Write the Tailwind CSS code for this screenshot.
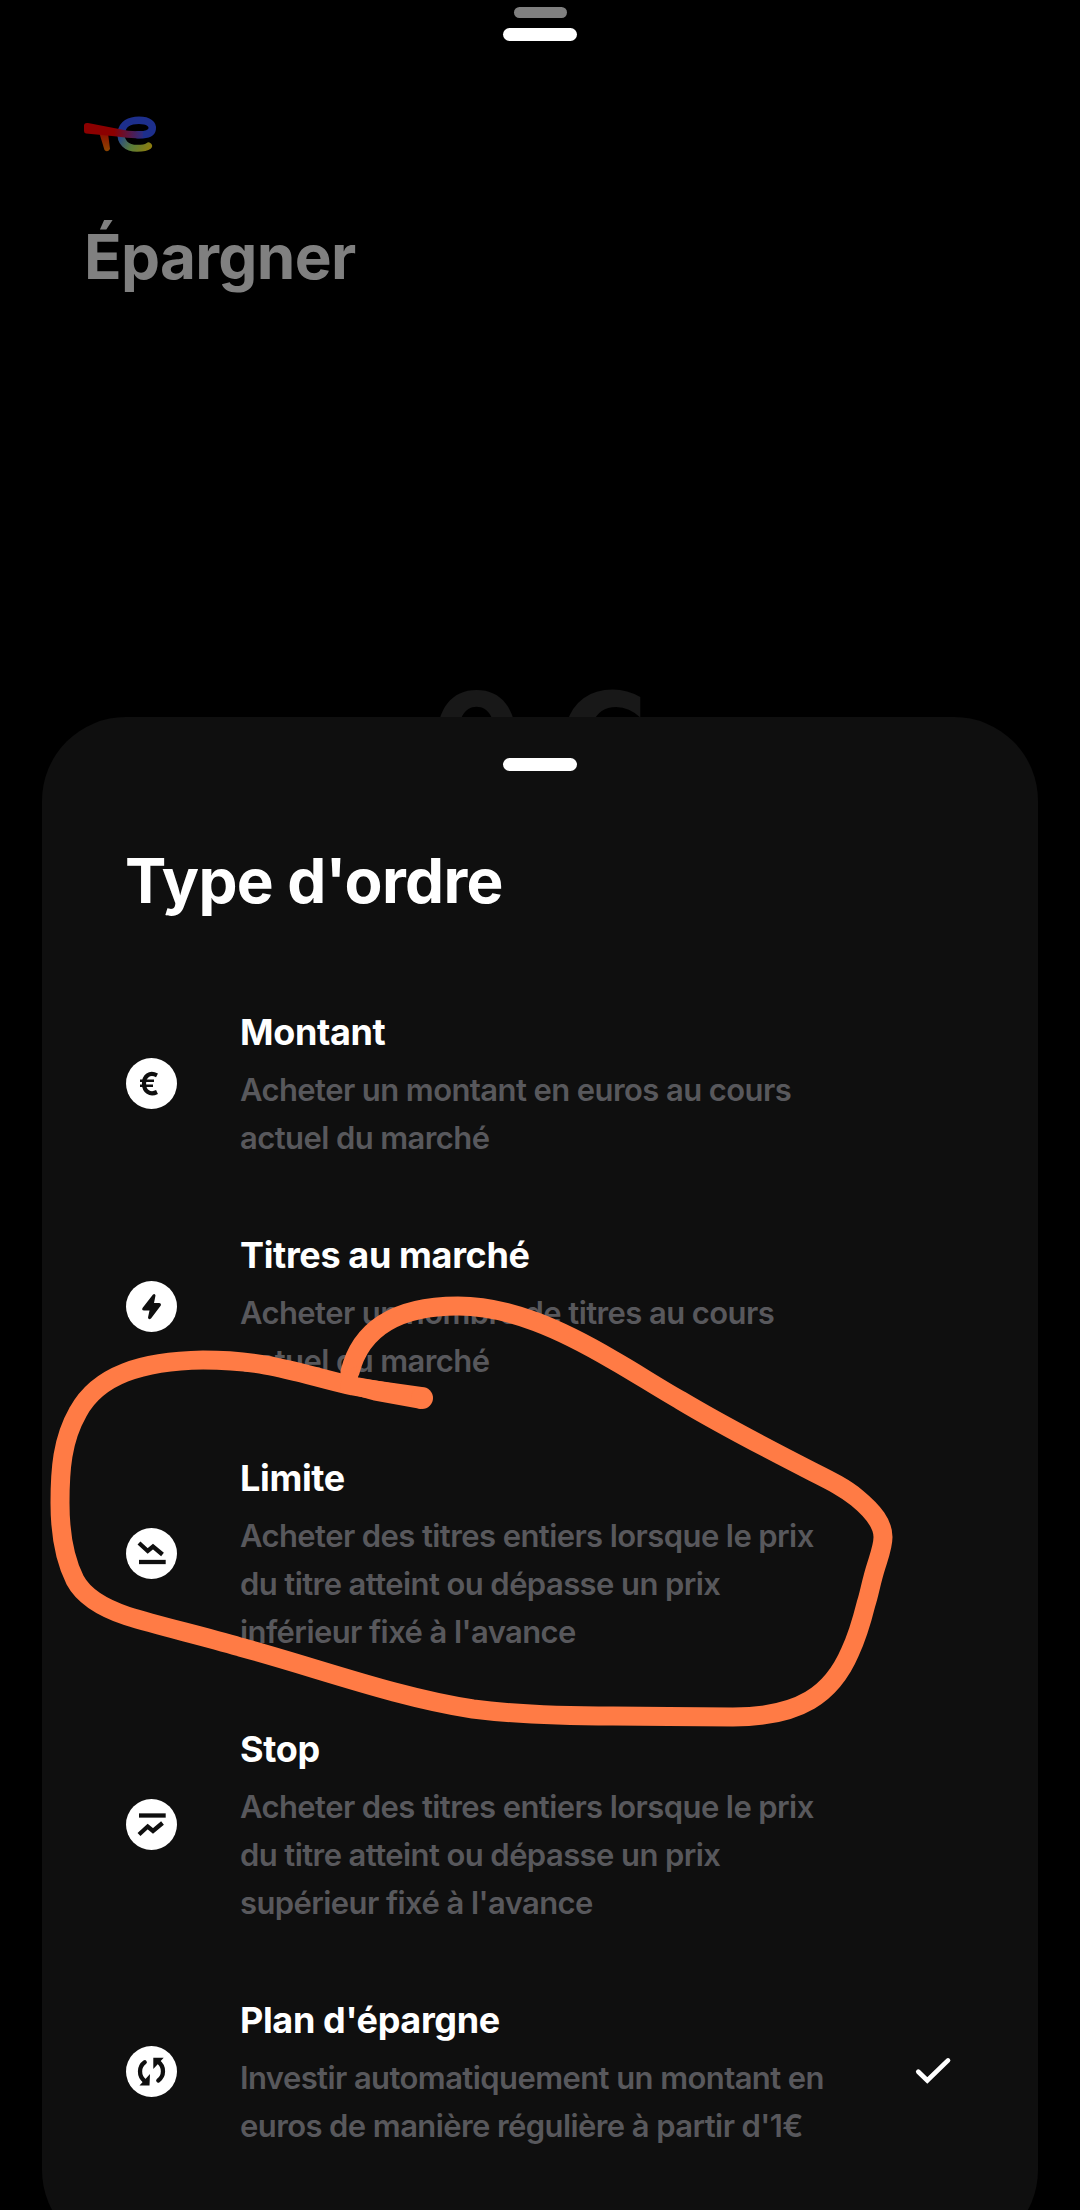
<!DOCTYPE html>
<html lang="fr">
<head>
  <meta charset="UTF-8" />
  <meta name="viewport" content="width=device-width, initial-scale=1.0"/>
  <title>Type d'ordre</title>
  <script src="https://cdn.jsdelivr.net/npm/@tailwindcss/browser@4"></script>
</head>
<body class="bg-black font-['Inter','Liberation_Sans',sans-serif] text-white">

  <div class="relative w-[1080px] h-[2210px] overflow-hidden">

    <!-- Dimmed page behind the sheet -->
    <header class="flex flex-col items-center pt-[7px]">
      <div class="w-[53px] h-[11px] rounded-full bg-[#808080]"></div>
      <div class="mt-[10px] w-[74px] h-[13px] rounded-full bg-white"></div>
    </header>

    <div class="pl-[83px] pt-[74px]">
      <svg class="block w-[74px] h-[38px]" viewBox="0 0 74 38" fill="none" stroke-linecap="round">
        <defs>
          <linearGradient id="bar" gradientUnits="userSpaceOnUse" x1="0" y1="0" x2="62" y2="0">
            <stop offset="0.5" stop-color="#8c0000"/>
            <stop offset="1" stop-color="#24308c"/>
          </linearGradient>
          <linearGradient id="leg" x1="0" y1="0" x2="0" y2="1">
            <stop offset="0" stop-color="#8c0a00"/>
            <stop offset="1" stop-color="#8c4600"/>
          </linearGradient>
          <linearGradient id="tail" gradientUnits="userSpaceOnUse" x1="38" y1="18" x2="66" y2="34">
            <stop offset="0" stop-color="#24458c"/>
            <stop offset="0.5" stop-color="#5a7d38"/>
            <stop offset="1" stop-color="#8c7d10"/>
          </linearGradient>
        </defs>
        <path d="M16 17 L25 18 L27 34 Q24.500 38 21.500 35 Z" fill="url(#leg)"/>
        <path d="M38.300 17 C36.500 27 44 33.300 54 33.300 C59 33.300 63 33 65.500 31" stroke="url(#tail)" stroke-width="7"/>
        <path d="M38.300 18 C39 9 47 5.300 56 5.300 C66 5.300 70 9.500 69.200 14 C68.500 18.500 62 20 55 19.800" stroke="#1d2f8c" stroke-width="7.500"/>
        <path d="M1 10 Q1.500 7.500 5 8 L36 14 Q48 17 60 16 L60 23 Q48 24 34 21.500 L3 18.500 Q1 18 1 16 Z" fill="url(#bar)"/>
      </svg>
      <h1 class="mt-[64px] ml-px w-fit text-[62px] leading-[80px] font-bold tracking-[-0.011em] text-[#808080]">Épargner</h1>
    </div>

    <div class="mt-[369px] h-[150px] text-center text-[136px] leading-[150px] font-bold text-[#181818]">0 <span class="font-['DejaVu_Sans']">€</span></div>

    <!-- Order type sheet -->
    <main class="absolute left-[42px] top-[717px] w-[996px] h-[1537px] rounded-[84px] bg-[#0f0f0f] px-[84px] pt-[41px]">
      <div class="mx-auto w-[74px] h-[13px] rounded-full bg-white"></div>
      <h2 class="mt-[70px] -ml-px w-fit text-[62px] leading-[80px] font-bold tracking-[-0.011em]">Type d'ordre</h2>

      <ul class="mt-[51px]">
        <li class="flex items-center h-[223px]">
          <svg class="w-[51px] h-[51px] shrink-0" viewBox="0 0 51 51" fill="none" stroke="#0f0f0f">
            <circle cx="25.500" cy="25.500" r="25.500" fill="#fff" stroke="none"/>
            <path d="M31 17.300 C23.500 13.500 18 18 18 25.500 C18 33.500 24 37.500 31 34" stroke-width="4.200"/>
            <path d="M14 22.700 H28 M14 27.800 H27" stroke-width="2.500"/>
          </svg>
          <div class="ml-[63px] w-[620px] pt-[2px]">
            <h3 class="w-fit text-[36px] leading-[48px] font-bold tracking-[-0.01em]">Montant</h3>
            <p class="mt-[10px] text-[31px] leading-[48px] font-semibold tracking-[-0.019em] text-[#58585c]">Acheter un montant en euros au cours<br/>actuel du marché</p>
          </div>
        </li>

        <li class="flex items-center h-[223px]">
          <svg class="w-[51px] h-[51px] shrink-0" viewBox="0 0 51 51">
            <circle cx="25.500" cy="25.500" r="25.500" fill="#fff"/>
            <path d="M27 13.500 L16.500 27 Q15.500 29.500 18 29.500 H23.500 L22 36.500 Q22.500 39.500 25 37.500 L34.800 24.500 Q35.500 22 33 22 H28 L29.500 14.500 Q29 12 27 13.500 Z" fill="#0f0f0f"/>
          </svg>
          <div class="ml-[63px] w-[620px] pt-[2px]">
            <h3 class="w-fit text-[36px] leading-[48px] font-bold tracking-[-0.01em]">Titres au marché</h3>
            <p class="mt-[10px] text-[31px] leading-[48px] font-semibold tracking-[-0.019em] text-[#58585c]">Acheter un nombre de titres au cours<br/>actuel du marché</p>
          </div>
        </li>

        <li class="flex items-center h-[271px]">
          <svg class="w-[51px] h-[51px] shrink-0" viewBox="0 0 51 51" fill="none" stroke="#0f0f0f" stroke-width="4.300">
            <circle cx="25.500" cy="25.500" r="25.500" fill="#fff" stroke="none"/>
            <path d="M13 15 L21.700 23 L27 18.500 L36.500 26.500"/>
            <path d="M13 34 H39.700"/>
          </svg>
          <div class="ml-[63px] w-[620px] pt-[2px]">
            <h3 class="w-fit text-[36px] leading-[48px] font-bold tracking-[-0.01em]">Limite</h3>
            <p class="mt-[10px] text-[31px] leading-[48px] font-semibold tracking-[-0.019em] text-[#58585c]">Acheter des titres entiers lorsque le prix<br/>du titre atteint ou dépasse un prix<br/>inférieur fixé à l'avance</p>
          </div>
        </li>

        <li class="flex items-center h-[271px]">
          <svg class="w-[51px] h-[51px] shrink-0" viewBox="0 0 51 51" fill="none" stroke="#0f0f0f" stroke-width="4.300">
            <circle cx="25.500" cy="25.500" r="25.500" fill="#fff" stroke="none"/>
            <path d="M13 16.500 H39.700"/>
            <path d="M13 35.500 L21.700 27.500 L27 32 L36.500 24"/>
          </svg>
          <div class="ml-[63px] w-[620px] pt-[2px]">
            <h3 class="w-fit text-[36px] leading-[48px] font-bold tracking-[-0.01em]">Stop</h3>
            <p class="mt-[10px] text-[31px] leading-[48px] font-semibold tracking-[-0.019em] text-[#58585c]">Acheter des titres entiers lorsque le prix<br/>du titre atteint ou dépasse un prix<br/>supérieur fixé à l'avance</p>
          </div>
        </li>

        <li class="flex items-center h-[223px]">
          <svg class="w-[51px] h-[51px] shrink-0" viewBox="0 0 51 51" fill="none" stroke="#0f0f0f" stroke-width="4.300">
            <circle cx="25.500" cy="25.500" r="25.500" fill="#fff" stroke="none"/>
            <path d="M18.700 16.200 C12.500 20.500 12.500 30 18.500 35" stroke-linecap="round"/>
            <path d="M32.300 34.500 C38.500 30 38.500 20.500 32.500 16" stroke-linecap="round"/>
            <path d="M24 28 L23.500 39.500 H13.500 Z M27.300 23 V11.700 H37.700 Z" fill="#0f0f0f" stroke="none"/>
          </svg>
          <div class="ml-[63px] w-[620px] pt-[2px]">
            <h3 class="w-fit text-[36px] leading-[48px] font-bold tracking-[-0.01em]">Plan d'épargne</h3>
            <p class="mt-[10px] text-[31px] leading-[48px] font-semibold tracking-[-0.019em] text-[#58585c]">Investir automatiquement un montant en<br/>euros de manière régulière à partir d'1€</p>
          </div>
          <svg class="ml-auto w-[40px] h-[28px] overflow-visible" viewBox="0 0 40 28" fill="none" stroke="#fff" stroke-width="4.700" stroke-linecap="round">
            <path d="M4.300 13.700 L13.300 22.500 L34 2.400"/>
          </svg>
        </li>
      </ul>
    </main>

    <!-- Hand-drawn circle around "Limite" -->
    <svg class="absolute left-0 top-0 w-[1080px] h-[2210px]" viewBox="0 0 1080 2210" fill="none" stroke="#ff7b45" stroke-width="19" stroke-linecap="round" stroke-linejoin="round">
      <path d="M350 1372 C360 1332 392 1306 458 1306 C510 1306 562 1330 613 1360 C636 1373 657 1387 680 1400 C725 1427 768 1449 813 1472 C831 1481 845 1488 857 1498 C874 1512 883 1524 883 1537 C883 1549 877 1561 873 1577 C870 1588 869 1595 866 1604 C862 1620 857 1637 850 1652 C832 1694 800 1717 733 1717 C690 1717 655 1716 613 1716 C565 1716 520 1715 473 1709 C395 1697 318 1668 240 1647 C200 1635 162 1627 127 1616 C100 1607 83 1595 75 1580 C64 1558 60 1533 60 1503 C60 1470 62 1440 78 1412 C98 1375 142 1361 203 1360 C270 1360 300 1374 353 1386 L421 1398"/>
      <path d="M342 1374 L340 1391 L374 1400.500 L421 1409 L422 1387 L358 1378 L356 1366 Z" fill="#ff7b45" stroke="none"/>
      <circle cx="422" cy="1398" r="11" fill="#ff7b45" stroke="none"/>
    </svg>
  </div>
</body>
</html>
